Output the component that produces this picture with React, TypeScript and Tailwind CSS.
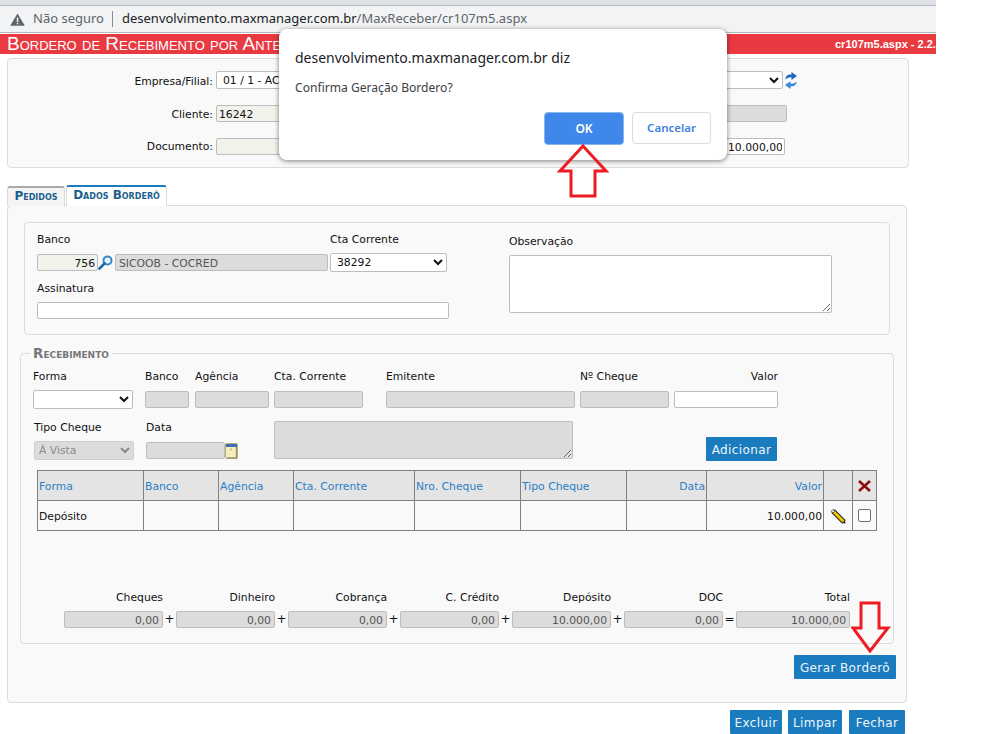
import type { ReactNode } from "react";

const FORM_FONT = "font-['DejaVu_Sans',sans-serif] text-[10.8px] text-[#111]";
const CHROME_FONT = "font-['Noto_Sans',sans-serif]";

const greyInput = "h-[17px] rounded-[2px] border border-[#bdbdbd] bg-[#dcdcdc] px-[3px] pt-px text-[#555] outline-none";
const greenInput = "h-[17px] rounded-[2px] border border-[#bdbdbd] bg-[#f0f3ea] px-[2px] pt-px text-[#111] outline-none";
const whiteInput = "h-[17px] rounded-[2px] border border-[#bdbdbd] bg-white px-[2px] pt-px text-[#111] outline-none";
const blueButton = "rounded-[1px] bg-[#1a7bbf] pt-px text-[12px] tracking-[0.4px] text-[#eef6fb]";

const headers = ["Forma", "Banco", "Agência", "Cta. Corrente", "Nro. Cheque", "Tipo Cheque", "Data", "Valor"];
const colWidths = [106, 75, 75, 121, 106, 106, 80, 117, 29, 24];

const totals = [
  { label: "Cheques", value: "0,00", sign: "+" },
  { label: "Dinheiro", value: "0,00", sign: "+" },
  { label: "Cobrança", value: "0,00", sign: "+" },
  { label: "C. Crédito", value: "0,00", sign: "+" },
  { label: "Depósito", value: "10.000,00", sign: "+" },
  { label: "DOC", value: "0,00", sign: "=" },
];

function Label({ children, className = "" }: { children: ReactNode; className?: string }) {
  return <div className={"h-[15px] leading-[15px] " + className}>{children}</div>;
}

function WarningIcon() {
  return (
    <svg width="15" height="13" viewBox="0 0 15 13">
      <path d="M7.5 0.5 L14.8 12.8 H0.2 Z" fill="#5f6368" />
      <rect x="6.8" y="4.5" width="1.5" height="4.5" fill="#f1f3f4" />
      <rect x="6.8" y="9.8" width="1.5" height="1.5" fill="#f1f3f4" />
    </svg>
  );
}

function RefreshIcon() {
  return (
    <svg width="12" height="17" viewBox="0 0 12 17">
      <path d="M0.5 7.5 C0.5 3.5 3.5 2 6.5 2.6 L6.5 0 L12 4 L6.5 8 L6.5 5.4 C4.5 5 2.5 5.5 0.5 7.5 Z" fill="#1f63c4" />
      <path d="M11.5 9.5 C11.5 13.5 8.5 14.8 5.5 14.3 L5.5 17 L0 13 L5.5 9.2 L5.5 11.6 C7.5 12 9.5 11.5 11.5 9.5 Z" fill="#3d86dd" />
    </svg>
  );
}

function SearchIcon() {
  return (
    <svg width="15" height="15" viewBox="0 0 15 15">
      <circle cx="9.5" cy="5.5" r="4" fill="#e8f3fb" stroke="#2f86c8" strokeWidth="2" />
      <path d="M6.5 8.5 L1.5 13.5" stroke="#1c6ba8" strokeWidth="2.6" strokeLinecap="round" />
    </svg>
  );
}

function CalendarIcon() {
  return (
    <svg width="13" height="16" viewBox="0 0 13 16">
      <rect x="0.5" y="0.5" width="12" height="15" rx="1" fill="#f5eebb" stroke="#b5ad82" />
      <rect x="1" y="1" width="11" height="3" fill="#3b6fb5" />
      <rect x="5" y="5.5" width="2" height="2" fill="#e0b0b0" />
      <path d="M11.5 4 V15 H2" fill="none" stroke="#9a9470" strokeWidth="1.4" />
    </svg>
  );
}

function PencilIcon() {
  return (
    <svg width="16" height="16" viewBox="0 0 16 16">
      <path d="M3 3 L14 14" stroke="#222" strokeWidth="5" />
      <path d="M3 3 L13.5 13.5" stroke="#f5c800" strokeWidth="2.8" />
      <path d="M1.2 3.2 L3.2 1.2 L5 3 L3 5 Z" fill="#f0d4d4" stroke="#222" strokeWidth="0.6" />
      <path d="M12.5 15 L15.5 15.5 L15 12.5 Z" fill="#222" />
    </svg>
  );
}

function RedX() {
  return (
    <svg width="13" height="12" viewBox="0 0 13 12">
      <path d="M1 1 L12 11 M12 1 L1 11" stroke="#8b0d0d" strokeWidth="2.6" />
    </svg>
  );
}

function UpArrow() {
  return (
    <svg width="52" height="55" viewBox="0 0 52 55" className="absolute left-[557px] top-[144px]">
      <path d="M26 2 L49 27 H38 V52 H14 V27 H3 Z" fill="none" stroke="#ed1c24" strokeWidth="3" />
    </svg>
  );
}

function DownArrow() {
  return (
    <svg width="40" height="52" viewBox="0 0 40 52" className="absolute left-[851px] top-[601px]">
      <path d="M10 2 H28 V27 H37 L19 50 L2 27 H10 Z" fill="none" stroke="#ed1c24" strokeWidth="3" />
    </svg>
  );
}

function BrowserBar() {
  return (
    <div className={CHROME_FONT + " w-[936px]"}>
      <div className="h-[5px] bg-[#dee1e6]" />
      <div className="flex h-[28px] items-center border-y border-[#b4b7bb] bg-[#f1f3f4] pl-[10px] text-[13px]">
        <WarningIcon />
        <span className="ml-[8px] text-[#5f6368]">Não seguro</span>
        <span className="ml-[8px] h-[16px] w-px bg-[#8a8d91]" />
        <span className="ml-[9px] text-[#202124]">desenvolvimento.maxmanager.com.br</span>
        <span className="text-[#5f6368]">/MaxReceber/cr107m5.aspx</span>
      </div>
      <div className="h-px bg-white" />
    </div>
  );
}

function TitleBar() {
  return (
    <div className="flex h-[20px] w-[936px] items-center overflow-hidden bg-[#e93a42] font-['Liberation_Sans',sans-serif] text-white">
      <div className="w-[835px] shrink-0 pl-[7px] text-[19px] leading-[20px] [font-variant:small-caps]">
        Bordero de Recebimento por Antecipação
      </div>
      <div className="shrink-0 whitespace-nowrap text-[11px] font-bold">cr107m5.aspx - 2.2.1</div>
    </div>
  );
}

function FilterPanel() {
  return (
    <div className="ml-[7px] mt-[4px] flex h-[110px] w-[902px] flex-col rounded-[4px] border border-[#dcdcdc] bg-[#f9f9f9] pt-[12px]">
      <div className="flex items-center">
        <Label className="mt-[2px] w-[205px] text-right">Empresa/Filial:</Label>
        <select className="ml-[3px] h-[18px] w-[567px] rounded-[2px] border border-[#bdbdbd] bg-white px-[2px]">
          <option>01 / 1 - ACME</option>
        </select>
        <span className="ml-[2px]">
          <RefreshIcon />
        </span>
      </div>
      <div className="mt-[16px] flex items-center">
        <Label className="mt-[2px] w-[205px] text-right">Cliente:</Label>
        <input readOnly defaultValue="16242" className={greenInput + " ml-[3px] w-[100px]"} />
        <input readOnly className={greyInput + " ml-[2px] w-[469px]"} />
      </div>
      <div className="mt-[16px] flex items-center">
        <Label className="w-[205px] text-right">Documento:</Label>
        <input readOnly className={greenInput + " ml-[3px] w-[200px]"} />
        <input readOnly defaultValue="10.000,00" className={whiteInput + " ml-[309px] w-[60px] text-right"} />
      </div>
    </div>
  );
}

function Tabs() {
  return (
    <div className="ml-[7px] mt-[17px] flex h-[21px] items-end text-[12px] font-bold text-[#1b5f8e] [font-variant:small-caps]">
      <div className="flex h-[20px] w-[58px] items-center justify-center rounded-t-[3px] border-x border-t-[2px] border-x-[#dcdcdc] border-t-[#aaaaaa] bg-[#f4f4f4] pb-[3px]">
        Pedidos
      </div>
      <div className="relative z-10 ml-px flex h-[21px] w-[101px] items-center justify-center rounded-t-[3px] border-x border-t-[2px] border-x-[#dcdcdc] border-t-[#1a7bbf] bg-white pb-[3px]">
        Dados Borderô
      </div>
    </div>
  );
}

function BancoPanel() {
  return (
    <div className="ml-[16px] mt-[15px] flex h-[113px] w-[866px] rounded-[4px] border border-[#dcdcdc] bg-[#f9f9f9] pl-[12px] pt-[9px]">
      <div className="w-[472px]">
        <div className="flex">
          <Label className="w-[293px]">Banco</Label>
          <Label>Cta Corrente</Label>
        </div>
        <div className="mt-[6px] flex h-[19px] items-center">
          <input readOnly defaultValue="756" className={greenInput + " w-[61px] text-right"} />
          <SearchIcon />
          <input readOnly defaultValue="SICOOB - COCRED" className={greyInput + " ml-[2px] w-[213px] px-[1px]"} />
          <select className="ml-[2px] h-[19px] w-[117px] rounded-[2px] border border-[#bdbdbd] bg-white px-[2px]">
            <option>38292</option>
          </select>
        </div>
        <Label className="mt-[9px]">Assinatura</Label>
        <input readOnly className={whiteInput + " mt-[6px] block w-[412px]"} />
      </div>
      <div>
        <Label className="mt-[2px]">Observação</Label>
        <textarea readOnly className="mt-[6px] block h-[58px] w-[323px] rounded-[2px] border border-[#bdbdbd] bg-white outline-none" />
      </div>
    </div>
  );
}

function PaymentsTable() {
  return (
    <table className="ml-[16px] mt-[9px] w-[840px] table-fixed border-collapse border border-[#808080]">
      <colgroup>
        {colWidths.map((width, index) => (
          <col key={index} style={{ width }} />
        ))}
      </colgroup>
      <thead>
        <tr className="h-[30px] bg-[#e4e4e4] text-[#2a7fc4]">
          {headers.map((header, index) => (
            <th
              key={header}
              className={
                "border border-[#808080] px-[1px] pt-[4px] font-normal " + (index >= 6 ? "text-right" : "text-left")
              }
            >
              {header}
            </th>
          ))}
          <th className="border border-[#808080]" />
          <th className="border border-[#808080]">
            <span className="flex justify-center">
              <RedX />
            </span>
          </th>
        </tr>
      </thead>
      <tbody>
        <tr className="h-[30px]">
          <td className="border border-[#808080] px-[1px] pt-[4px]">Depósito</td>
          <td className="border border-[#808080]" />
          <td className="border border-[#808080]" />
          <td className="border border-[#808080]" />
          <td className="border border-[#808080]" />
          <td className="border border-[#808080]" />
          <td className="border border-[#808080]" />
          <td className="border border-[#808080] px-[1px] pt-[4px] text-right">10.000,00</td>
          <td className="border border-[#808080]">
            <span className="flex justify-center">
              <PencilIcon />
            </span>
          </td>
          <td className="border border-[#808080]">
            <span className="flex justify-center">
              <span className="h-[13px] w-[13px] rounded-[2px] border border-[#707070] bg-white" />
            </span>
          </td>
        </tr>
      </tbody>
    </table>
  );
}

function Totals() {
  return (
    <div className="ml-[43px] mt-[59px] flex">
      {totals.map((item) => (
        <div key={item.label} className="flex">
          <div className="w-[99px]">
            <Label className="text-right">{item.label}</Label>
            <input readOnly defaultValue={item.value} className={greyInput + " mt-[6px] block w-[99px] text-right"} />
          </div>
          <div className="flex w-[13px] items-end justify-center text-[12px] leading-[17px]">{item.sign}</div>
        </div>
      ))}
      <div className="w-[114px]">
        <Label className="text-right">Total</Label>
        <input readOnly defaultValue="10.000,00" className={greyInput + " mt-[6px] block w-[114px] text-right"} />
      </div>
    </div>
  );
}

function Recebimento() {
  return (
    <fieldset className="ml-[12px] mt-[12px] h-[297px] w-[874px] rounded-[4px] border border-[#dcdcdc] px-0">
      <legend className="ml-[9px] px-[3px] text-[13.5px] font-bold leading-[12px] text-[#777] [font-variant:small-caps]">
        Recebimento
      </legend>
      <div className="ml-[12px] mt-[10px] flex">
        <Label className="w-[112px]">Forma</Label>
        <Label className="w-[50px]">Banco</Label>
        <Label className="w-[79px]">Agência</Label>
        <Label className="w-[112px]">Cta. Corrente</Label>
        <Label className="w-[194px]">Emitente</Label>
        <Label className="w-[94px]">Nº Cheque</Label>
        <Label className="w-[104px] text-right">Valor</Label>
      </div>
      <div className="ml-[12px] mt-[6px] flex items-center">
        <select className="h-[19px] w-[100px] rounded-[2px] border border-[#bdbdbd] bg-white" />
        <input readOnly className={greyInput + " ml-[12px] w-[44px]"} />
        <input readOnly className={greyInput + " ml-[6px] w-[74px]"} />
        <input readOnly className={greyInput + " ml-[5px] w-[89px]"} />
        <input readOnly className={greyInput + " ml-[23px] w-[189px]"} />
        <input readOnly className={greyInput + " ml-[5px] w-[89px]"} />
        <input readOnly className={whiteInput + " ml-[5px] w-[104px]"} />
      </div>
      <div className="ml-[13px] mt-[11px] flex items-start">
        <div className="w-[112px]">
          <Label>Tipo Cheque</Label>
          <select disabled className="mt-[6px] h-[19px] w-[100px] rounded-[2px] border border-[#cfcfcf] bg-[#dcdcdc] text-[#8a8a8a]">
            <option>À Vista</option>
          </select>
        </div>
        <div className="w-[128px]">
          <Label>Data</Label>
          <div className="mt-[7px] flex items-center">
            <input readOnly className={greyInput + " w-[79px]"} />
            <CalendarIcon />
          </div>
        </div>
        <textarea readOnly className="mt-[1px] block h-[38px] w-[299px] rounded-[2px] border border-[#bdbdbd] bg-[#dcdcdc] outline-none" />
        <button className={blueButton + " ml-[133px] mt-[17px] h-[24px] w-[71px]"}>Adicionar</button>
      </div>
      <PaymentsTable />
      <Totals />
    </fieldset>
  );
}

function DialogBox() {
  return (
    <div className={CHROME_FONT + " absolute left-[279px] top-[29px] h-[131px] w-[448px] rounded-[8px] bg-white pl-[16px] pt-[18px] shadow-[0_1px_5px_rgba(0,0,0,0.5)]"}>
      <div className="text-[14px] leading-[22px] text-[#202124]">desenvolvimento.maxmanager.com.br diz</div>
      <div className="mt-[10px] text-[12.1px] leading-[18px] text-[#3c4043]">Confirma Geração Bordero?</div>
      <div className="mt-[15px] flex justify-end pr-[16px]">
        <button className="h-[33px] w-[80px] rounded-[4px] border border-[#8ab4f0] bg-[#3f87e8] text-[12px] font-semibold text-white">OK</button>
        <button className="ml-[8px] h-[32px] w-[79px] rounded-[4px] border border-[#dadce0] bg-white text-[11.5px] font-semibold text-[#3f7fe0]">Cancelar</button>
      </div>
    </div>
  );
}

export default function App() {
  return (
    <div className={FORM_FONT + " relative h-[734px] w-[995px] overflow-hidden bg-white"}>
      <BrowserBar />
      <TitleBar />
      <FilterPanel />
      <Tabs />
      <div className="ml-[7px] mt-[-1px] h-[498px] w-[900px] rounded-[4px] border border-[#dcdcdc] bg-[#f9f9f9] pt-px">
        <BancoPanel />
        <Recebimento />
        <div className="mt-[11px] flex justify-end pr-[10px]">
          <button className={blueButton + " h-[24px] w-[102px]"}>Gerar Borderô</button>
        </div>
      </div>
      <div className="ml-[730px] mt-[7px] flex">
        <button className={blueButton + " h-[24px] w-[52px]"}>Excluir</button>
        <button className={blueButton + " ml-[6px] h-[24px] w-[54px]"}>Limpar</button>
        <button className={blueButton + " ml-[7px] h-[24px] w-[56px]"}>Fechar</button>
      </div>
      <DialogBox />
      <UpArrow />
      <DownArrow />
    </div>
  );
}
